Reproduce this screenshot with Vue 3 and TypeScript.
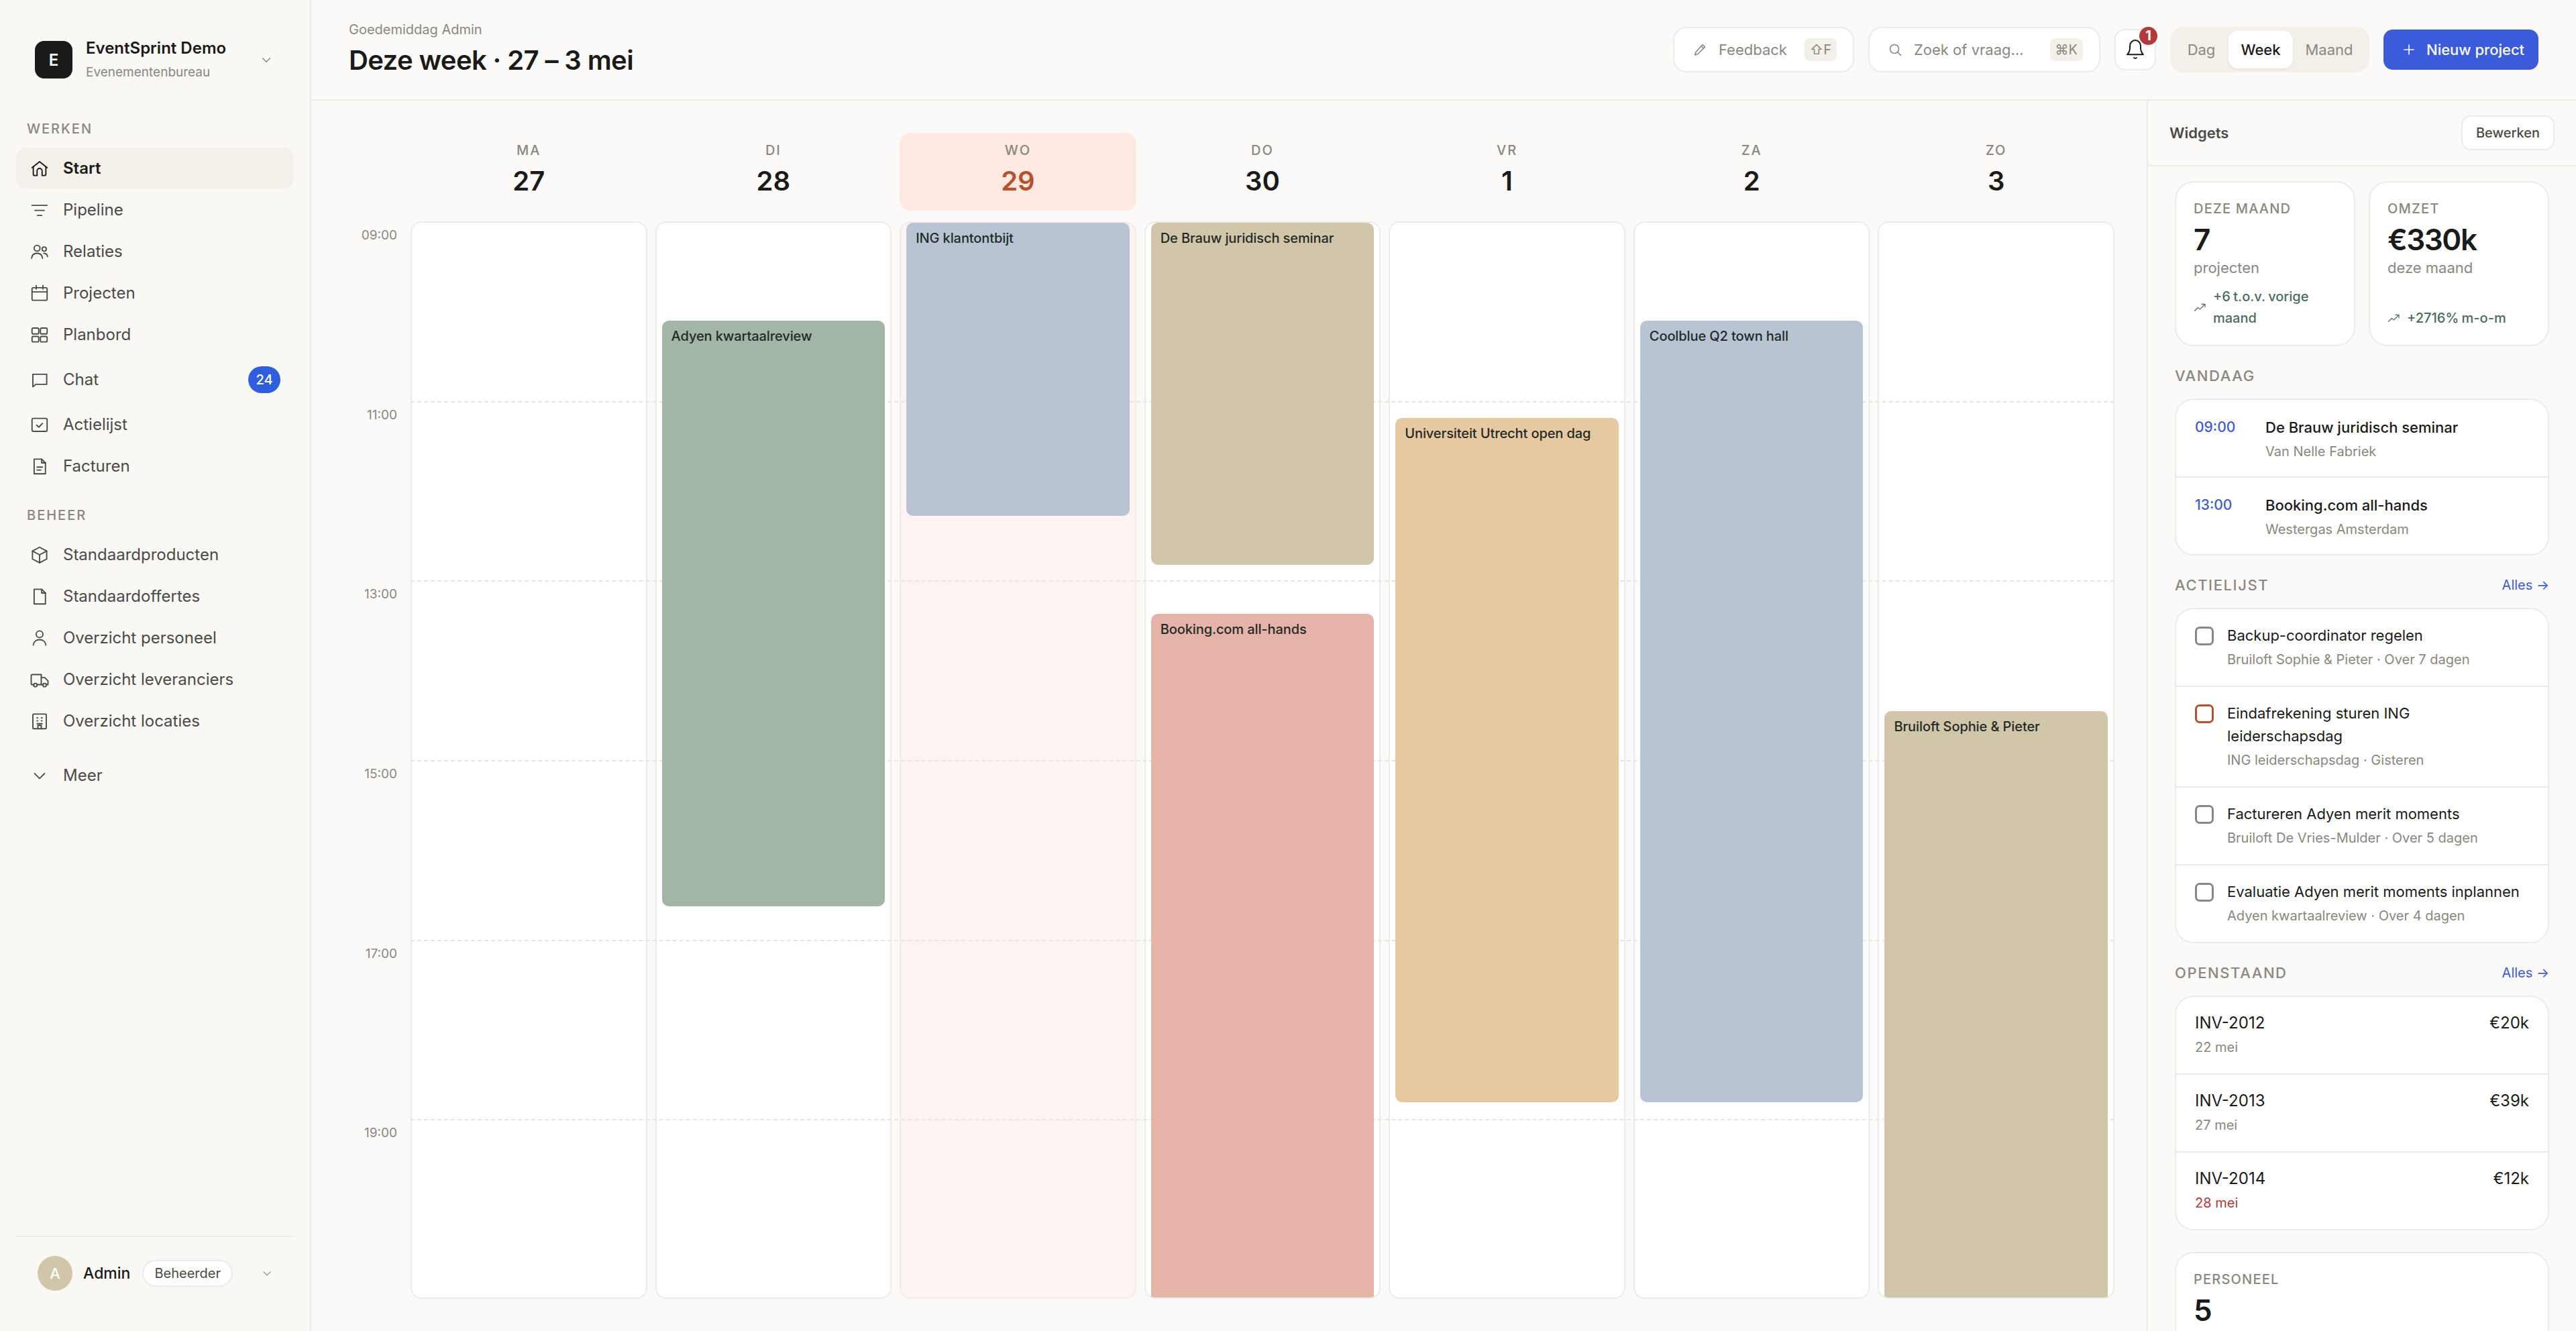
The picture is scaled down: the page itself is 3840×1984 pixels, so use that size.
<script setup lang="ts">
const icons: Record<string, string> = {
  home: '<path d="M3 11.2 12 4l9 7.2"/><path d="M4.5 10v9a1.5 1.5 0 0 0 1.5 1.5h3V15a3 3 0 0 1 6 0v5.500h3a1.500 1.500 0 0 0 1.500-1.500v-9"/>',
  filter: '<path d="M3 6.500h18M6.500 12.500h11M9.500 18.500h5"/>',
  users: '<circle cx="9" cy="8" r="3.500"/><path d="M2.500 20c.4-3.800 3-6 6.500-6s6.100 2.200 6.500 6"/><circle cx="17.500" cy="9" r="2.500"/><path d="M17 14c2.500.1 4.200 1.700 4.500 4"/>',
  calendar: '<rect x="3" y="5.500" width="18" height="15" rx="1.500"/><path d="M3 10.500h18M8 3v4M16 3v4"/>',
  grid: '<rect x="3" y="4" width="8" height="7" rx="1.500"/><rect x="13" y="4" width="8" height="7" rx="1.500"/><rect x="3" y="14" width="8" height="6.500" rx="1.500"/><rect x="13" y="14" width="8" height="6.500" rx="1.500"/>',
  chat: '<path d="M4 5.500h16.500v12H7.500L4 20.500z"/>',
  check: '<rect x="3" y="4.500" width="18" height="15.500" rx="1.800"/><path d="m8.500 12.500 2.500 2.500 4.500-4.500"/>',
  invoice: '<path d="M5.500 3.500h9l4.500 4.500v13h-13.500z"/><path d="M14.500 3.500V8H19M9 13h6.500M9 16.500h4.500"/>',
  box: '<path d="m12 3 8.500 4.500v9.500L12 21.500 3.500 17V7.500z"/><path d="m3.500 7.500 8.500 4.500 8.500-4.500M12 12v9.500"/>',
  file: '<path d="M5.500 3.500h9l4.500 4.500v13h-13.500z"/><path d="M14.500 3.500V8H19"/>',
  user: '<circle cx="12" cy="7.500" r="4"/><path d="M4.500 20.500c.4-4 3.500-6.500 7.500-6.500s7.100 2.500 7.500 6.500"/>',
  truck: '<path d="M5 18H3.500A1.500 1.500 0 0 1 2 16.500V7.500A1.500 1.500 0 0 1 3.500 6H14v12H9"/><path d="M14 9.500h4l4 4V18h-2M16 18h-2"/><circle cx="7" cy="18.500" r="2"/><circle cx="18" cy="18.500" r="2"/>',
  building: '<rect x="4" y="3.500" width="16" height="17.500" rx="1"/><path d="M9 8h.8M14.200 8h.8M9 11.500h.8M14.200 11.500h.8M9 15h6M10 21v-4h4v4"/>',
  chevron: '<path d="m6 9.500 6 6 6-6"/>',
}

const workNav = [
  { label: 'Start', icon: 'home', active: true },
  { label: 'Pipeline', icon: 'filter' },
  { label: 'Relaties', icon: 'users' },
  { label: 'Projecten', icon: 'calendar' },
  { label: 'Planbord', icon: 'grid' },
  { label: 'Chat', icon: 'chat', badge: '24' },
  { label: 'Actielijst', icon: 'check' },
  { label: 'Facturen', icon: 'invoice' },
]
const manageNav = [
  { label: 'Standaardproducten', icon: 'box' },
  { label: 'Standaardoffertes', icon: 'file' },
  { label: 'Overzicht personeel', icon: 'user' },
  { label: 'Overzicht leveranciers', icon: 'truck' },
  { label: 'Overzicht locaties', icon: 'building' },
]

const times = ['09:00', '11:00', '13:00', '15:00', '17:00', '19:00']
const lines = [1, 2, 3, 4, 5]

interface Ev { title: string; start: number; end: number; color: string }
interface Day { name: string; num: string; today?: boolean; events: Ev[] }
const days: Day[] = [
  { name: 'MA', num: '27', events: [] },
  { name: 'DI', num: '28', events: [{ title: 'Adyen kwartaalreview', start: 1, end: 7, color: '#a3b5a7' }] },
  { name: 'WO', num: '29', today: true, events: [{ title: 'ING klantontbijt', start: 0, end: 3, color: '#b8c4d3' }] },
  { name: 'DO', num: '30', events: [
    { title: 'De Brauw juridisch seminar', start: 0, end: 3.5, color: '#d1c6a9' },
    { title: 'Booking.com all-hands', start: 4, end: 11.2, color: '#e6b3a8' },
  ] },
  { name: 'VR', num: '1', events: [{ title: 'Universiteit Utrecht open dag', start: 2, end: 9, color: '#e6c9a0' }] },
  { name: 'ZA', num: '2', events: [{ title: 'Coolblue Q2 town hall', start: 1, end: 9, color: '#b8c4d3' }] },
  { name: 'ZO', num: '3', events: [{ title: 'Bruiloft Sophie & Pieter', start: 5, end: 11.2, color: '#d1c6a9' }] },
]
const evStyle = (e: Ev) => ({
  top: `${(e.start / 11) * 100}%`,
  height: `${((e.end - e.start) / 11) * 100}%`,
  background: e.color,
})

const today = [
  { time: '09:00', title: 'De Brauw juridisch seminar', place: 'Van Nelle Fabriek' },
  { time: '13:00', title: 'Booking.com all-hands', place: 'Westergas Amsterdam' },
]
const actions = [
  { title: 'Backup-coordinator regelen', sub: 'Bruiloft Sophie & Pieter · Over 7 dagen' },
  { title: 'Eindafrekening sturen ING leiderschapsdag', sub: 'ING leiderschapsdag · Gisteren', late: true },
  { title: 'Factureren Adyen merit moments', sub: 'Bruiloft De Vries-Mulder · Over 5 dagen' },
  { title: 'Evaluatie Adyen merit moments inplannen', sub: 'Adyen kwartaalreview · Over 4 dagen' },
]
const invoices = [
  { id: 'INV-2012', date: '22 mei', amount: '€20k' },
  { id: 'INV-2013', date: '27 mei', amount: '€39k' },
  { id: 'INV-2014', date: '28 mei', amount: '€12k', late: true },
]
</script>

<template>
  <div class="app">
    <aside class="sidebar">
      <div class="brand">
        <div class="logo">E</div>
        <div class="brand-text">
          <div class="brand-name">EventSprint Demo</div>
          <div class="brand-sub">Evenementenbureau</div>
        </div>
        <svg class="chev" viewBox="0 0 24 24" v-html="icons.chevron"></svg>
      </div>

      <div class="nav-label first">WERKEN</div>
      <nav>
        <div v-for="n in workNav" :key="n.label" class="nav-item" :class="{ active: n.active }">
          <svg class="ico" viewBox="0 0 24 24" v-html="icons[n.icon]"></svg>
          <span>{{ n.label }}</span>
          <span v-if="n.badge" class="nav-badge">{{ n.badge }}</span>
        </div>
      </nav>

      <div class="nav-label">BEHEER</div>
      <nav>
        <div v-for="n in manageNav" :key="n.label" class="nav-item">
          <svg class="ico" viewBox="0 0 24 24" v-html="icons[n.icon]"></svg>
          <span>{{ n.label }}</span>
        </div>
      </nav>
      <div class="nav-item more">
        <svg class="ico" viewBox="0 0 24 24" v-html="icons.chevron"></svg>
        <span>Meer</span>
      </div>

      <div class="foot">
        <div class="avatar">A</div>
        <span class="foot-name">Admin</span>
        <span class="foot-role">Beheerder</span>
        <svg class="chev foot-chev" viewBox="0 0 24 24" v-html="icons.chevron"></svg>
      </div>
    </aside>

    <div class="content">
      <header class="topbar">
        <div class="heading">
          <div class="greet">Goedemiddag Admin</div>
          <h1>Deze week · 27 – 3 mei</h1>
        </div>
        <div class="tools">
          <div class="field feedback">
            <svg class="tool-ico" viewBox="0 0 24 24"><path d="M16 4.500 19.500 8 9 18.500 4.500 20 6 15.500z"/><path d="m14 6.500 3.500 3.500"/></svg>
            <span>Feedback</span>
            <kbd>⇧F</kbd>
          </div>
          <div class="field search">
            <svg class="tool-ico" viewBox="0 0 24 24"><circle cx="11" cy="11" r="6.500"/><path d="m16 16 4.500 4.500"/></svg>
            <span>Zoek of vraag…</span>
            <kbd>⌘K</kbd>
          </div>
          <div class="bell">
            <svg viewBox="0 0 24 24"><path d="M3 17.500h18c-2-2-3-4-3-7.500V8a6 6.500 0 0 0-12 0v2c0 3.500-1 5.500-3 7.500z"/><path d="M10.500 21c.8 1 2.200 1 3 0"/></svg>
            <span class="bell-badge">1</span>
          </div>
          <div class="seg">
            <span>Dag</span>
            <span class="on">Week</span>
            <span>Maand</span>
          </div>
          <div class="new">
            <svg viewBox="0 0 24 24"><path d="M12 5v14M5 12h14"/></svg>
            <span>Nieuw project</span>
          </div>
        </div>
      </header>

      <div class="body">
        <main class="cal">
          <div class="cal-row heads">
            <div></div>
            <div v-for="d in days" :key="d.name" class="day-head" :class="{ today: d.today }">
              <div class="day-name">{{ d.name }}</div>
              <div class="day-num">{{ d.num }}</div>
            </div>
          </div>
          <div class="cal-row grid">
            <div class="times">
              <div v-for="t in times" :key="t" class="time">{{ t }}</div>
            </div>
            <div v-for="d in days" :key="d.name" class="col" :class="{ today: d.today }">
              <div v-for="e in d.events" :key="e.title" class="event" :style="evStyle(e)">{{ e.title }}</div>
            </div>
            <div class="lines">
              <div v-for="l in lines" :key="l" class="line"></div>
            </div>
          </div>
        </main>

        <aside class="panel">
          <div class="panel-head">
            <span class="panel-title">Widgets</span>
            <span class="edit">Bewerken</span>
          </div>
          <div class="panel-body">
            <div class="stats">
              <div class="card stat">
                <div class="stat-label">DEZE MAAND</div>
                <div class="stat-value">7</div>
                <div class="stat-sub">projecten</div>
                <div class="trend">
                  <svg viewBox="0 0 24 24"><path d="m2 18 6-6 4 3 9-9M15 5.500h6.500V11"/></svg>
                  <span>+6 t.o.v. vorige maand</span>
                </div>
              </div>
              <div class="card stat">
                <div class="stat-label">OMZET</div>
                <div class="stat-value">€330k</div>
                <div class="stat-sub">deze maand</div>
                <div class="trend">
                  <svg viewBox="0 0 24 24"><path d="m2 18 6-6 4 3 9-9M15 5.500h6.500V11"/></svg>
                  <span>+2716% m-o-m</span>
                </div>
              </div>
            </div>

            <section>
              <div class="sec-head"><span class="sec-label">VANDAAG</span></div>
              <div class="card list">
                <div v-for="t in today" :key="t.time" class="row today-row">
                  <span class="row-time">{{ t.time }}</span>
                  <div>
                    <div class="row-title strong">{{ t.title }}</div>
                    <div class="row-sub">{{ t.place }}</div>
                  </div>
                </div>
              </div>
            </section>

            <section>
              <div class="sec-head">
                <span class="sec-label">ACTIELIJST</span>
                <span class="all">Alles →</span>
              </div>
              <div class="card list">
                <div v-for="a in actions" :key="a.title" class="row action-row">
                  <span class="box" :class="{ late: a.late }"></span>
                  <div>
                    <div class="row-title">{{ a.title }}</div>
                    <div class="row-sub">{{ a.sub }}</div>
                  </div>
                </div>
              </div>
            </section>

            <section>
              <div class="sec-head">
                <span class="sec-label">OPENSTAAND</span>
                <span class="all">Alles →</span>
              </div>
              <div class="card list">
                <div v-for="i in invoices" :key="i.id" class="row inv-row">
                  <div>
                    <div class="row-title inv">{{ i.id }}</div>
                    <div class="row-sub" :class="{ red: i.late }">{{ i.date }}</div>
                  </div>
                  <span class="row-title inv">{{ i.amount }}</span>
                </div>
              </div>
            </section>

            <div class="card stat">
              <div class="stat-label">PERSONEEL</div>
              <div class="stat-value">5</div>
              <div class="stat-sub">medewerkers</div>
            </div>
          </div>
        </aside>
      </div>
    </div>
  </div>
</template>

<style>
html, body { margin: 0; overflow: hidden; }
</style>

<style scoped>
.app {
  display: grid;
  grid-template-columns: 464px 1fr;
  height: 1984px;
  overflow: hidden;
  font-family: Inter, "DejaVu Sans", sans-serif;
  color: #1a1a1a;
  background: #fbfaf8;
}
.sidebar {
  display: flex;
  flex-direction: column;
  padding: 56px 24px 60px;
  background: #faf8f4;
  border-right: 2px solid #ecebe6;
  box-sizing: border-box;
}
.brand { display: flex; align-items: center; padding: 0 30px 0 28px; height: 66px; }
.logo {
  width: 56px; height: 56px; border-radius: 14px; background: #1a1a1a; color: #fff;
  display: flex; align-items: center; justify-content: center; font-size: 24px; font-weight: 600;
  margin-right: 20px; flex: none;
}
.brand-text { flex: 1; }
.brand-name { font-size: 24px; line-height: 32px; font-weight: 600; }
.brand-sub { font-size: 19px; line-height: 28px; margin-top: 6px; color: #8a8780; }
.chev { width: 22px; height: 22px; fill: none; stroke: #8a8780; stroke-width: 1.500; stroke-linecap: round; stroke-linejoin: round; flex: none; }
.nav-label {
  font-size: 20px; line-height: 24px; font-weight: 500; letter-spacing: 2px; color: #8a8780;
  padding-left: 16px; margin: 30px 0 16px;
}
.nav-label.first { margin-top: 58px; }
.nav-item {
  display: flex; align-items: center; gap: 20px; padding: 16px 20px; border-radius: 16px;
  font-size: 24px; line-height: 30px; color: #4a4a48; font-weight: 400;
}
.nav-item.active { background: #f3f0e9; color: #1a1a1a; font-weight: 600; }
.nav-item.more { margin-top: 19px; }
.ico { width: 30px; height: 30px; fill: none; stroke: currentColor; stroke-width: 1.500; stroke-linecap: round; stroke-linejoin: round; flex: none; }
.nav-badge {
  margin-left: auto; min-width: 48px; height: 40px; box-sizing: border-box; border-radius: 20px;
  background: #2f5fdf; color: #fff; font-size: 20px; font-weight: 500; line-height: 40px; text-align: center;
}
.foot {
  margin-top: auto; border-top: 2px solid #ecebe6; padding: 28px 32px 0; display: flex; align-items: center;
}
.avatar {
  width: 52px; height: 52px; border-radius: 50%; background: #d1c6a9; color: #fff; font-size: 22px; font-weight: 500;
  display: flex; align-items: center; justify-content: center; flex: none;
}
.foot-name { font-size: 23px; font-weight: 500; margin-left: 16px; }
.foot-role {
  margin-left: 18px; height: 40px; box-sizing: border-box; padding: 0 16px; border: 2px solid #ecebe6; border-radius: 20px;
  background: #fff; font-size: 20px; line-height: 36px; color: #4a4a48; font-weight: 400;
}
.foot-chev { margin-left: auto; margin-right: -2px; width: 20px; height: 20px; }

.content { display: flex; flex-direction: column; min-width: 0; height: 1984px; }
.topbar {
  height: 150px; box-sizing: border-box; flex: none; display: flex; align-items: center; justify-content: space-between;
  padding: 0 56px; border-bottom: 2px solid #ecebe6;
}
.greet { font-size: 20px; line-height: 28px; color: #8a8780; }
h1 { margin: 4px 0 0; font-size: 40px; line-height: 56px; font-weight: 600; letter-spacing: -0.6px; }
.tools { display: flex; align-items: center; gap: 21px; }
.field {
  height: 68px; box-sizing: border-box; border: 2px solid #ecebe6; border-radius: 20px; background: #fff;
  display: flex; align-items: center; padding: 0 24px 0 26px; gap: 16px; font-size: 22px; color: #8a8780;
}
.feedback { width: 270px; }
.search { width: 346px; }
.field kbd {
  margin-left: auto; font-family: Inter, "DejaVu Sans", sans-serif; font-size: 20px; line-height: 34px; height: 34px;
  padding: 0 8px; border-radius: 8px; background: #f3f0e9; color: #8a8780;
}
.tool-ico { width: 24px; height: 24px; fill: none; stroke: #8a8780; stroke-width: 1.600; stroke-linecap: round; stroke-linejoin: round; flex: none; }
.bell {
  position: relative; width: 62px; height: 62px; box-sizing: border-box; border: 2px solid #ecebe6; border-radius: 16px;
  background: #fff; display: flex; align-items: center; justify-content: center;
}
.bell svg { width: 32px; height: 32px; fill: none; stroke: #1a1a1a; stroke-width: 1.500; stroke-linecap: round; stroke-linejoin: round; }
.bell-badge {
  position: absolute; top: -5px; right: -4px; width: 27px; height: 27px; border-radius: 50%; background: #b23a3a; color: #fff;
  font-size: 20px; font-weight: 700; line-height: 27px; text-align: center;
}
.seg {
  display: grid; grid-template-columns: 81px 96px 108px; padding: 6px; border-radius: 20px; background: #f3f0e9; height: 68px; box-sizing: border-box;
  font-size: 22px; color: #8a8780; text-align: center;
}
.seg span { line-height: 56px; border-radius: 14px; }
.seg .on { background: #fff; color: #1a1a1a; font-weight: 500; box-shadow: 0 2px 4px rgba(0, 0, 0, 0.06); }
.new {
  height: 60px; width: 231px; box-sizing: border-box; display: flex; align-items: center; gap: 14px; padding-left: 26px;
  background: #3b5bdb; color: #fff; border-radius: 14px; font-size: 22px; font-weight: 500;
}
.new svg { width: 24px; height: 24px; fill: none; stroke: #fff; stroke-width: 1.600; stroke-linecap: round; }

.body { flex: 1; display: grid; grid-template-columns: 1fr 640px; min-height: 0; }
.cal { padding: 48px; display: flex; flex-direction: column; gap: 16px; min-height: 0; }
.cal-row { display: grid; grid-template-columns: 88px repeat(7, 1fr); column-gap: 12px; }
.day-head { height: 116px; box-sizing: border-box; padding-top: 14px; text-align: center; border-radius: 16px; }
.day-head.today { background: #fde8e2; }
.day-name { font-size: 20px; line-height: 24px; letter-spacing: 2px; color: #8a8780; font-weight: 500; }
.day-num { font-size: 40px; line-height: 48px; margin-top: 10px; font-weight: 600; }
.today .day-num { color: #b5512d; }
.grid { position: relative; flex: 1; min-height: 0; }
.times { display: flex; flex-direction: column; }
.time { flex: 1; padding: 9px 8px 0 0; font-size: 19px; line-height: 24px; text-align: right; color: #8a8780; }
.col {
  position: relative; overflow: hidden; background: #fff; border: 2px solid #ecebe6; border-radius: 16px; min-height: 0;
}
.col.today { background: #fdf3f0; border-color: #f3ebe6; }
.event {
  position: absolute; left: 8px; right: 8px; z-index: 2; border-radius: 10px; box-sizing: border-box; padding: 10px 14px;
  font-size: 20px; line-height: 26px; font-weight: 500; color: #1f2a26; letter-spacing: -0.1px;
}
.lines {
  position: absolute; left: 100px; right: 0; top: 2px; bottom: 0; display: flex; flex-direction: column; pointer-events: none;
}
.line { flex: 1; border-bottom: 2px dashed #e6e5e0; }
.lines::after { content: ""; flex: 1; }

.panel { border-left: 2px solid #ecebe6; display: flex; flex-direction: column; min-height: 0; overflow: hidden; }
.panel-head {
  height: 98px; box-sizing: border-box; flex: none; display: flex; align-items: center; justify-content: space-between;
  padding: 0 32px; border-bottom: 2px solid #ecebe6;
}
.panel-title { font-size: 22px; font-weight: 600; color: #4a4a48; }
.edit {
  height: 52px; box-sizing: border-box; padding: 0 20px; border: 2px solid #ecebe6; border-radius: 14px; background: #fff;
  font-size: 20px; line-height: 48px; font-weight: 500; color: #4a4a48;
}
.panel-body { padding: 22px 40px; display: flex; flex-direction: column; gap: 32px; }
.card { background: #fff; border: 2px solid #ecebe6; border-radius: 28px; box-sizing: border-box; }
.stats { display: grid; grid-template-columns: 1fr 1fr; gap: 20px; }
.stat { padding: 27px 26px 24px; display: flex; flex-direction: column; flex: none; }
.stat-label { font-size: 20px; line-height: 24px; font-weight: 500; letter-spacing: 1.200px; color: #8a8780; }
.stat-value { font-size: 44px; line-height: 52px; font-weight: 600; margin-top: 8px; letter-spacing: -1.500px; }
.stat-sub { font-size: 22px; line-height: 28px; margin-top: 2px; color: #8a8780; }
.trend {
  margin-top: auto; padding-top: 13px; display: flex; align-items: center; gap: 10px; font-size: 20px; line-height: 32px;
  font-weight: 500; color: #4a6b5d; word-spacing: -1px;
}
.trend svg { width: 19px; height: 19px; fill: none; stroke: #4a6b5d; stroke-width: 1.500; stroke-linecap: round; stroke-linejoin: round; flex: none; }
.sec-head { display: flex; justify-content: space-between; align-items: center; margin-bottom: 22px; height: 24px; }
.sec-label { font-size: 22px; font-weight: 500; letter-spacing: 1.600px; color: #8a8780; }
.all { font-size: 20px; color: #3b5bdb; }
.list { overflow: hidden; }
.row { padding: 22px 28px 24px; border-bottom: 2px solid #ecebe6; }
.row:last-child { border-bottom: 0; }
.row-title { font-size: 22px; line-height: 34px; font-weight: 400; }
.row-title.strong { font-weight: 500; }
.row-title.inv { font-size: 24px; font-weight: 400; }
.row-sub { font-size: 20px; line-height: 30px; margin-top: 4px; color: #8a8780; }
.row-sub.red { color: #b23a3a; }
.today-row { display: grid; grid-template-columns: 105px 1fr; padding-top: 24px; padding-bottom: 22px; }
.row-time { font-size: 21px; line-height: 34px; font-weight: 500; color: #3b5bdb; }
.action-row { display: flex; gap: 20px; align-items: flex-start; }
.box {
  width: 28px; height: 28px; box-sizing: border-box; border: 3px solid #8a8780; border-radius: 7px; flex: none; margin-top: 4px;
}
.box.late { border-color: #b5512d; }
.inv-row { display: flex; justify-content: space-between; align-items: flex-start; }
</style>
